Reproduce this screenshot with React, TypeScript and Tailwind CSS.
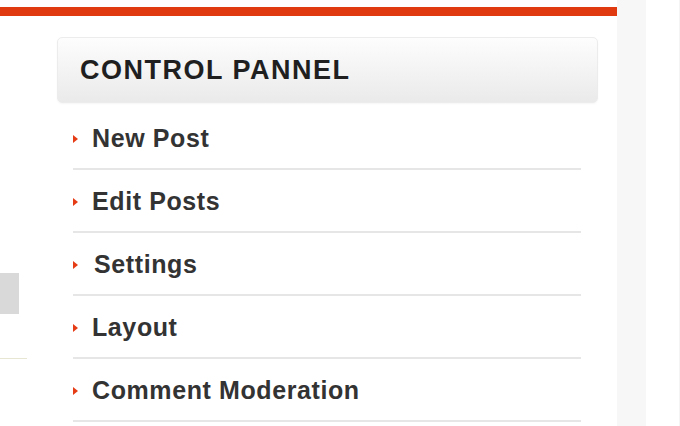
import React from "react";

const items = ["New Post", "Edit Posts", "Settings", "Layout", "Comment Moderation"];

const Arrow: React.FC = () => (
  <svg width="5" height="8" viewBox="0 0 5 8" className="shrink-0">
    <path d="M0 0 L5 4 L0 8 Z" fill="#e63c16" />
  </svg>
);

const App: React.FC = () => {
  return (
    <div
      className="flex w-[680px] h-[426px] overflow-hidden bg-white"
      style={{ fontFamily: '"Liberation Sans", Arial, sans-serif' }}
    >
      <div className="w-[617px] shrink-0 pt-[7px]">
        <div className="h-[9px] bg-[#e03a10]" />
        <div className="flex">
          {/* left strip */}
          <div className="w-[57px] shrink-0 flex flex-col">
            <div className="mt-[257px] w-[19px] h-[41px] bg-[#d9d9d9]" />
            <div className="mt-[44px] w-[27px] h-px bg-[#e6e6d2]" />
          </div>

          {/* control panel */}
          <div className="w-[541px] shrink-0 mt-[21px]">
            <div className="h-[66px] flex items-center pl-[22px] rounded-[5px] border border-[#ececec] bg-gradient-to-b from-[#fdfdfd] to-[#eaeaea] shadow-[0_1px_2px_rgba(0,0,0,0.04)]">
              <h2 className="text-[27px] leading-[27px] font-bold tracking-[1.5px] text-[#1f1f1f]">
                CONTROL PANNEL
              </h2>
            </div>
            <ul className="ml-[16px] w-[508px] mt-[4px]">
              {items.map((label) => (
                <li
                  key={label}
                  className="h-[63px] pt-[19px] border-b-2 border-[#e6e6e6]"
                >
                  <div className="flex items-center h-[25px]">
                    <Arrow />
                    <span
                      className={`${
                        label === "Settings" ? "ml-[16px]" : "ml-[14px]"
                      } text-[25px] leading-[25px] font-bold tracking-[0.6px] text-[#333]`}
                    >
                      {label}
                    </span>
                  </div>
                </li>
              ))}
            </ul>
          </div>
        </div>
      </div>

      {/* right gray column */}
      <div className="w-[29px] shrink-0 bg-[#f7f7f7]" />
      <div className="flex-1 border-r border-[#f4f4f4]" />
    </div>
  );
};

export default App;
